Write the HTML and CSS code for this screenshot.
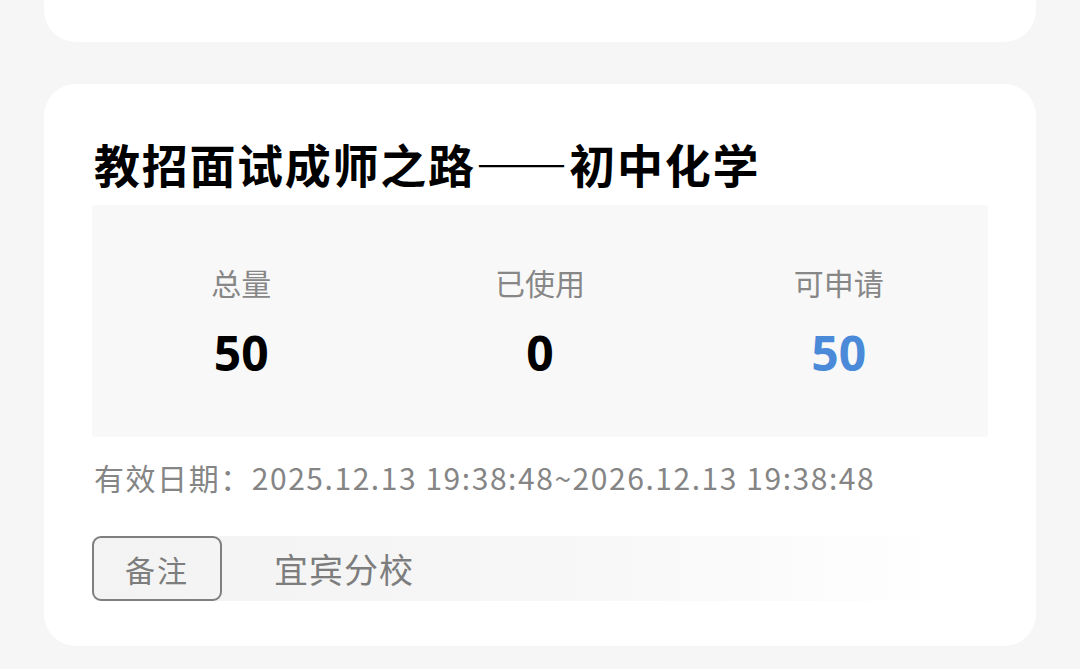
FILE: index.html
```html
<!DOCTYPE html>
<html lang="zh-CN">
<head>
<meta charset="utf-8">
<link rel="stylesheet" href="styles.css">
</head>
<body>
<div class="page">
  <div class="card card-top"></div>
  <div class="card card-main">
    <h1 class="title">教招面试成师之路——初中化学</h1>
    <div class="stats">
      <div class="stat">
        <div class="stat-label">总量</div>
        <div class="stat-value">50</div>
      </div>
      <div class="stat">
        <div class="stat-label">已使用</div>
        <div class="stat-value">0</div>
      </div>
      <div class="stat">
        <div class="stat-label">可申请</div>
        <div class="stat-value stat-value-blue">50</div>
      </div>
    </div>
    <div class="date">有效日期：2025.12.13 19:38:48~2026.12.13 19:38:48</div>
    <div class="remark">
      <span class="remark-tag">备注</span>
      <span class="remark-text">宜宾分校</span>
    </div>
  </div>
</div>
</body>
</html>
```

FILE: styles.css
```css
html, body {
  margin: 0;
  padding: 0;
  background: #f6f6f6;
}
body {
  font-family: "Noto Sans", "Noto Sans CJK SC", sans-serif;
  width: 1080px;
  height: 669px;
  overflow: hidden;
}
.page {
  padding: 0 44px;
  display: flex;
  flex-direction: column;
  gap: 42px;
}
.card {
  background: #ffffff;
  border-radius: 32px;
}
.card-top {
  height: 42px;
  border-radius: 0 0 32px 32px;
}
.card-main {
  height: 562px;
  box-sizing: border-box;
  padding: 44px 48px 0 48px;
  display: flex;
  flex-direction: column;
}
.title {
  margin: 0 0 7px 2px;
  font-family: "Noto Sans CJK SC", sans-serif;
  font-weight: 700;
  font-size: 46px;
  line-height: 70px;
  color: #000;
  letter-spacing: 1.7px;
}
.stats {
  background: #f8f8f8;
  border-radius: 3px;
  height: 232px;
  display: grid;
  grid-template-columns: 1fr 1fr 1fr;
  align-content: start;
  padding-top: 57px;
  box-sizing: border-box;
}
.stat {
  display: flex;
  flex-direction: column;
  align-items: center;
  gap: 21px;
}
.stat-label {
  font-family: "Noto Sans CJK SC", sans-serif;
  font-size: 30px;
  line-height: 40px;
  color: #878787;
}
.stat-value {
  font-family: "Noto Sans", sans-serif;
  font-weight: 700;
  font-size: 48px;
  line-height: 60px;
  color: #000;
}
.stat-value-blue {
  color: #4a8ad8;
}
.date {
  margin: 18px 0 0 2px;
  font-family: "Noto Sans CJK SC", sans-serif;
  font-size: 30px;
  line-height: 44px;
  color: #858585;
  letter-spacing: 1.55px;
}
.remark {
  margin-top: 37px;
  height: 65px;
  display: flex;
  align-items: center;
  gap: 52px;
  width: 860px;
  background: linear-gradient(to right, #f3f3f3 0%, #f6f6f6 45%, #fafafa 75%, #ffffff 100%);
  border-radius: 8px 0 0 8px;
}
.remark-tag {
  box-sizing: border-box;
  height: 65px;
  width: 130px;
  border: 2.5px solid #7f7f7f;
  border-radius: 9px;
  display: flex;
  align-items: center;
  justify-content: center;
  font-family: "Noto Sans CJK SC", sans-serif;
  font-size: 30px;
  letter-spacing: 2px;
  color: #7d7d7d;
}
.remark-text {
  font-family: "Noto Sans CJK SC", sans-serif;
  font-size: 34px;
  letter-spacing: 1px;
  color: #7d7d7d;
}
```
